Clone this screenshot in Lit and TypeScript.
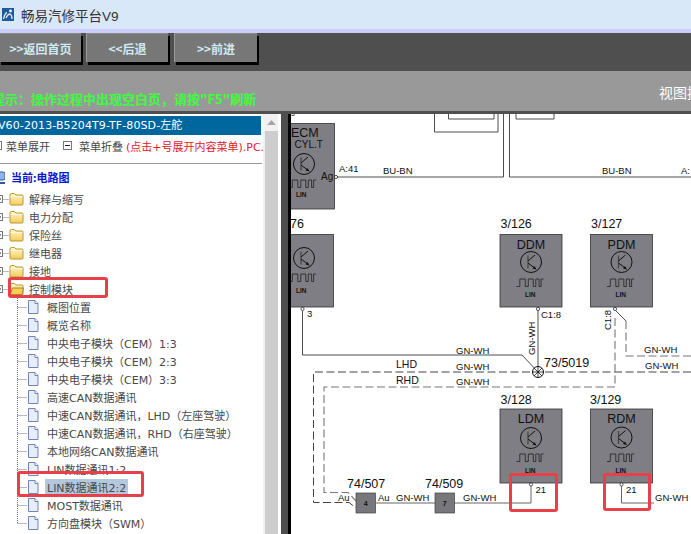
import {LitElement, css, html, svg} from 'lit';
import {customElement} from 'lit/decorators.js';

const FOLDERS = ['解释与缩写', '电力分配', '保险丝', '继电器', '接地'];
const PAGES = [
	'概图位置',
	'概览名称',
	'中央电子模块（CEM）1:3',
	'中央电子模块（CEM）2:3',
	'中央电子模块（CEM）3:3',
	'高速CAN数据通讯',
	'中速CAN数据通讯，LHD（左座驾驶）',
	'中速CAN数据通讯，RHD（右座驾驶）',
	'本地网络CAN数据通讯',
	'LIN数据通讯1:2',
	'LIN数据通讯2:2',
	'MOST数据通讯',
	'方向盘模块（SWM）',
];
const SELECTED = 'LIN数据通讯2:2';

// red annotations drawn over the screenshot: x, y, width, height
const MARKS = [
	[8, 277, 100, 21],
	[17, 471, 127, 26],
	[509, 473, 49, 39],
	[603, 473, 48, 38],
];

// everything in the diagram uses page coordinates (see the viewBox)
const label = (x: number, y: number, t: string, size = 9.5) =>
	svg`<text x=${x} y=${y} font-size=${size}>${t}</text>`;

const transistor = (cx: number, cy: number) => svg`
	<circle cx=${cx} cy=${cy} r="10.5" fill="none" stroke="#111" stroke-width="1"></circle>
	<path d="M${cx - 3} ${cy - 6.5} V${cy + 6.5}" stroke="#444" stroke-width="1.2"></path>
	<path d="M${cx - 3} ${cy - 1} L${cx + 4} ${cy - 7} M${cx - 3} ${cy + 1} L${cx + 5} ${cy + 7}" fill="none" stroke="#111" stroke-width="1"></path>
	<path d="M${cx + 5.5} ${cy + 7.5} l-4 -1 l2 -2.5 z" fill="#111"></path>`;

const wave = (x: number, y: number) => svg`
	<path d="M${x} ${y + 7.5} h3.3 v-7.5 h5.5 v7.5 h3 v-7.5 h5 v7.5 h2.5 v-7.5 h3.3 v7.5 h2 v-7.5 h2.5" fill="none" stroke="#222" stroke-width="0.8"></path>`;

const module = (
	x: number,
	y: number,
	w: number,
	h: number,
	title: string,
	cy: number,
	wy: number,
	ly: number,
) => svg`
	<rect x=${x} y=${y} width=${w} height=${h} fill="#7e7e84" stroke="#333" stroke-width="0.8"></rect>
	<text x=${x + w / 2} y=${y + 14} font-size="12.5" text-anchor="middle">${title}</text>
	${transistor(x + w / 2, cy)}
	${wave(x + w / 2 - 14.5, wy)}
	<text x=${x + w / 2 - 6} y=${ly} font-size="6.5" font-weight="bold" fill="#222">LIN</text>`;

const pin = (x: number, y: number) =>
	svg`<circle cx=${x} cy=${y} r="1.6" fill="#fff" stroke="#111" stroke-width="0.7"></circle>`;

const splitter = (x: number, y: number, n: string) => svg`
	<rect x=${x} y=${y} width="19.5" height="20" fill="#77777c" stroke="#444" stroke-width="0.7"></rect>
	<text x=${x + 9.7} y=${y + 12.5} font-size="7" font-weight="bold" text-anchor="middle">${n}</text>`;

@customElement('app-root')
export class AppRoot extends LitElement {
	static styles = css`
		:host {
			display: flex;
			flex-direction: column;
			position: relative;
			width: 691px;
			height: 534px;
			overflow: hidden;
			background: #fff;
			font-family: "DejaVu Sans", "Noto Sans CJK SC", sans-serif;
			font-size: 11px;
			color: #484848;
		}

		.title {
			flex: none;
			height: 29px;
			display: flex;
			align-items: center;
			gap: 7px;
			padding-left: 2px;
			background: #d9e8f9;
			border-bottom: 4px solid #ccccfa;
			font-family: "Liberation Sans", "Noto Sans CJK SC", sans-serif;
			font-size: 13.5px;
			color: #333;
		}

		.nav {
			flex: none;
			height: 38px;
			display: flex;
			gap: 5px;
			background: #4f4f4f;
		}

		.nav button {
			box-sizing: content-box;
			height: 28px;
			margin: 0;
			padding: 0;
			border: none;
			border-left: 1px solid #9a9a9a;
			border-top: 1px solid #8a8a8a;
			box-shadow: 2px 3px 0 #000;
			background: #777;
			color: #cfeaf2;
			font-family: "Noto Sans CJK SC", sans-serif;
			font-size: 12px;
			font-weight: bold;
		}

		.hint {
			flex: none;
			height: 43px;
			display: flex;
			align-items: flex-end;
			padding-bottom: 3px;
			box-sizing: border-box;
			background: #999;
			border-bottom: 3px solid #4f4f4f;
			white-space: nowrap;
			font-family: "Noto Sans CJK SC", sans-serif;
		}

		.hint-text {
			flex: none;
			width: 667px;
			margin-left: -8px;
			color: #3dff3d;
			font-size: 13px;
			font-weight: bold;
			line-height: 18px;
		}

		.hint-view {
			flex: none;
			color: #fff;
			font-size: 14px;
			line-height: 26px;
			margin-bottom: 3px;
		}

		.body {
			flex: 1;
			min-height: 0;
			display: flex;
		}

		.left {
			flex: none;
			width: 263px;
			padding-top: 2px;
			overflow: hidden;
		}

		.car {
			height: 19px;
			margin-right: 2px;
			background: #00669e;
			color: #fff;
			font-size: 11px;
			letter-spacing: 0.1px;
			line-height: 19px;
			white-space: nowrap;
			text-indent: -2px;
			overflow: hidden;
		}

		.menu {
			height: 29px;
			display: flex;
			align-items: center;
			padding-bottom: 7px;
			box-sizing: border-box;
			white-space: nowrap;
			border-bottom: 1px solid #999;
			margin-right: 1px;
		}

		.menu svg {
			flex: none;
		}

		.menu .open {
			margin-left: 4px;
		}

		.menu .shut {
			margin: 0 7px 0 13px;
		}

		.menu .red {
			margin-left: 3px;
			color: #e0202a;
		}

		.tree {
			padding-top: 4px;
		}

		.row {
			height: 18px;
			display: flex;
			align-items: center;
			white-space: nowrap;
		}

		.row svg {
			flex: none;
		}

		.current {
			margin-bottom: 4px;
			margin-left: -3px;
			gap: 6px;
			color: #0a16d0;
			font-weight: bold;
			font-family: "Noto Sans CJK SC", sans-serif;
		}

		.folder span {
			margin-left: 5px;
		}

		.page {
			padding-left: 17px;
		}

		.page span {
			margin-left: 6px;
			padding: 0 2px;
		}

		.page span.sel {
			background: #b5c7dd;
		}

		.scroll {
			flex: none;
			width: 15px;
			display: flex;
			flex-direction: column;
			align-items: flex-end;
			background: #f1f1f1;
		}

		.arrow {
			flex: none;
			height: 17px;
			width: 13px;
			display: flex;
			align-items: center;
			justify-content: center;
		}

		.thumb {
			flex: 1;
			width: 13px;
			background: #cdcdcd;
		}

		.gap {
			flex: none;
			width: 3px;
		}

		.split {
			flex: none;
			width: 7px;
			background: #4f4f4f;
			border-right: 3px solid #000;
		}

		.diagram {
			flex: 1;
			min-width: 0;
			display: block;
			height: 420px;
		}

		.diagram text {
			font-family: "Liberation Sans", sans-serif;
			fill: #111;
		}

		.mark {
			position: absolute;
			box-sizing: border-box;
			border: 3px solid #e8404a;
			border-radius: 3px;
		}
	`;

	private logo() {
		return html`<svg width="12" height="13" viewBox="0 0 12 13">
			<rect width="12" height="13" fill="#1d5c9c"></rect>
			<circle cx="8.5" cy="3" r="1.4" fill="#fff"></circle>
			<path d="M1.5 11 Q3 5 5 4.5 M4 10 Q6 6 8 6 Q10 7 10 11" fill="none" stroke="#dfeaf6" stroke-width="1.3"></path>
		</svg>`;
	}

	private box(size: number, plus: boolean) {
		const m = size / 2;
		return svg`
			<rect x="0.5" y="0.5" width=${size - 1} height=${size - 1} fill="#fff" stroke="#777"></rect>
			<path d="M2 ${m} H${size - 2}" stroke="#222"></path>
			${plus ? svg`<path d="M${m} 2 V${size - 2}" stroke="#222"></path>` : ''}`;
	}

	private folderIcon(open: boolean) {
		return html`<svg width="15" height="14" viewBox="0 0 15 14">
			<defs>
				<linearGradient id="fg" x1="0" y1="0" x2="0" y2="1">
					<stop offset="0" stop-color="#fff6cc"></stop>
					<stop offset="1" stop-color="#f5cd5a"></stop>
				</linearGradient>
			</defs>
			<path d="M1 3 q0 -1.5 1.5 -1.5 h3 l1.5 1.5 h6 q1 0 1 1 v8 q0 1 -1 1 h-11 q-1 0 -1 -1 z" fill="url(#fg)" stroke="#b8962e"></path>
			${open
				? svg`<path d="M1 12.5 L3.5 6 H14.5 L13 12.5 Z" fill="#f6cf55" stroke="#a98420"></path>`
				: svg`<path d="M1.5 4.5 H13.5" stroke="#fff8d8"></path>`}
		</svg>`;
	}

	private pageIcon() {
		return html`<svg width="12" height="14" viewBox="0 0 12 14">
			<path d="M1.5 0.5 H8 L11 3.5 V13.5 H1.5 Z" fill="#e6edfb" stroke="#6f86b4"></path>
			<path d="M8 0.5 V3.5 H11" fill="#fff" stroke="#6f86b4"></path>
		</svg>`;
	}

	private folderRow(name: string, open = false) {
		return html`<div class="row folder">
			<svg width="9" height="18" viewBox="0 0 9 18">
				<path d="M2.5 9.5 H9" stroke="#777" stroke-dasharray="1 1"></path>
				<g transform="translate(-5 5)">${this.box(8, !open)}</g>
			</svg>
			${this.folderIcon(open)}
			<span>${name}</span>
		</div>`;
	}

	private pageRow(name: string, last: boolean) {
		return html`<div class="row page">
			<svg width="10" height="18" viewBox="0 0 10 18">
				<path d="M0.5 0 V${last ? 9 : 18} M0.5 9.5 H10" fill="none" stroke="#777" stroke-dasharray="1 1"></path>
			</svg>
			${this.pageIcon()}
			<span class=${name === SELECTED ? 'sel' : ''}>${name}</span>
		</div>`;
	}

	private diagram() {
		return html`<svg class="diagram" viewBox="291 114 400 420" width="400" height="420">
			<!-- upper part of the sheet -->
			<path d="M434.5 114 V132 H498 V114 M448.5 114 V119 H494 V114 M516 114 V119 H554 V114" fill="none" stroke="#222" stroke-width="0.8"></path>
			<path d="M337 177 H503.5 V114 M509.5 114 V177 H691" fill="none" stroke="#222" stroke-width="0.8"></path>
			${label(291, 116, '5', 7)}
			${label(339, 172, 'A:41')} ${label(383, 174, 'BU-BN')} ${label(602, 174, 'BU-BN')} ${label(681, 174, 'A:')}

			<!-- ECM, partly hidden by the frame on the left -->
			<rect x="280" y="123.5" width="54.5" height="85.5" fill="#7e7e84" stroke="#333" stroke-width="0.8"></rect>
			${label(291, 136.5, 'ECM', 12.5)} ${label(294.5, 148, 'CYL.T', 10)}
			${transistor(304, 164)} ${wave(289, 180)}
			<text x="296" y="197" font-size="6.5" font-weight="bold" fill="#222">LIN</text>
			${label(321, 179.5, 'Ag', 10)} ${pin(336, 177)}

			<!-- 76 -->
			${label(290, 228, '76', 12.5)}
			<rect x="280" y="234.5" width="53.5" height="72.5" fill="#7e7e84" stroke="#333" stroke-width="0.8"></rect>
			${transistor(304, 258)} ${wave(289, 274)}
			<text x="296" y="293" font-size="6.5" font-weight="bold" fill="#222">LIN</text>
			${pin(302.5, 309)} ${label(307, 317, '3')}
			<path d="M302.5 311 V355 H522 L538 372" fill="none" stroke="#222" stroke-width="0.8"></path>

			<!-- door modules, upper row -->
			${label(500.5, 228, '3/126', 12.5)}
			${module(500, 234.5, 62, 72.5, 'DDM', 262, 279, 297)}
			${pin(538, 309)} ${label(541, 318, 'C1:8')}
			<path d="M538 311 V372" stroke="#222" stroke-width="0.8"></path>
			<text transform="translate(535 355) rotate(-90)" font-size="9.5">GN-WH</text>
			${label(591, 228, '3/127', 12.5)}
			${module(590.5, 234.5, 62, 72.5, 'PDM', 262, 279, 297)}
			${pin(615, 309)}
			<text transform="translate(611 330) rotate(-90)" font-size="9.5">C1:8</text>
			<path d="M616 311 L626 321" fill="none" stroke="#222" stroke-width="0.8"></path>

			<!-- LHD and RHD dashed routes -->
			<path d="M691 372 H313.5 V502.5 H349 L356 508" fill="none" stroke="#444" stroke-width="1" stroke-dasharray="8 3.5"></path>
			<path d="M615 318 V387 H324 V492.5 H348 L356 501" fill="none" stroke="#777" stroke-width="1.1" stroke-dasharray="8 3.5"></path>
			<path d="M691 356 H626 V321" fill="none" stroke="#777" stroke-width="1.1" stroke-dasharray="8 3.5"></path>
			${label(396, 368, 'LHD', 10.5)} ${label(396, 383.5, 'RHD', 10.5)}
			${label(456, 354, 'GN-WH')} ${label(456, 370, 'GN-WH')} ${label(456, 385, 'GN-WH')}
			${label(644, 353, 'GN-WH')} ${label(645, 369, 'GN-WH')}

			<circle cx="538" cy="372" r="5.5" fill="#fff" stroke="#111"></circle>
			<path d="M532.5 372 H543.5 M538 366.5 V377.5 M534 368 L542 376 M534 376 L542 368" stroke="#111" stroke-width="0.8"></path>
			${label(544, 367, '73/5019', 12.5)}

			<!-- door modules, lower row -->
			${label(500.5, 404, '3/128', 12.5)}
			${module(500, 409, 62, 74, 'LDM', 438, 454, 473)}
			${label(590, 404, '3/129', 12.5)}
			${module(590.5, 409, 62, 74, 'RDM', 437.5, 454, 473)}
			${pin(531, 484.5)} ${label(535.5, 493, '21')}
			${pin(621.5, 484.5)} ${label(626, 493, '21')}

			<!-- bottom line with the two connectors -->
			<path d="M376 503 H435 M454 503 H531 V486 M621.5 486 V503 H654" fill="none" stroke="#555" stroke-width="0.9"></path>
			${label(347, 488, '74/507', 12.5)} ${label(425, 488, '74/509', 12.5)}
			${splitter(356, 493, '4')} ${splitter(435, 493, '7')}
			${label(338, 501, 'Au')} ${label(378, 501, 'Au')}
			${label(396, 501, 'GN-WH')} ${label(463, 501, 'GN-WH')} ${label(655, 501, 'GN-WH')}
		</svg>`;
	}

	render() {
		return html`
			<div class="title">${this.logo()}<span>畅易汽修平台V9</span></div>
			<div class="nav">
				<button style="width:81px;margin-left:-1px">&gt;&gt;返回首页</button>
				<button style="width:81px">&lt;&lt;后退</button>
				<button style="width:82px;margin-left:1px">&gt;&gt;前进</button>
			</div>
			<div class="hint">
				<span class="hint-text">提示：操作过程中出现空白页，请按"F5"刷新</span>
				<span class="hint-view">视图控制</span>
			</div>
			<div class="body">
				<div class="left">
					<div class="car">V60-2013-B5204T9-TF-80SD-左舵</div>
					<div class="menu">
						<svg width="2" height="9" viewBox="7 0 2 9">${this.box(9, false)}</svg>
						<span class="open">菜单展开</span>
						<svg class="shut" width="9" height="9" viewBox="0 0 9 9">${this.box(9, false)}</svg>
						<span>菜单折叠</span>
						<span class="red">(点击+号展开内容菜单).PC.</span>
					</div>
					<div class="tree">
						<div class="row current">
							<svg width="8" height="13" viewBox="3 0 8 13">
								<rect x="1" y="1" width="10" height="8" rx="2" fill="#8fb4e8" stroke="#2d5aa6"></rect>
								<path d="M3 12 H11" stroke="#2d5aa6" stroke-width="2"></path>
							</svg>
							<span>当前:电路图</span>
						</div>
						${FOLDERS.map(f => this.folderRow(f))}
						${this.folderRow('控制模块', true)}
						${PAGES.map((p, i) => this.pageRow(p, i === PAGES.length - 1))}
					</div>
				</div>
				<div class="scroll">
					<div class="arrow">
						<svg width="9" height="5" viewBox="0 0 9 5"><path d="M0 5 L4.5 0 L9 5 Z" fill="#a6a6a6"></path></svg>
					</div>
					<div class="thumb"></div>
				</div>
				<div class="gap"></div>
				<div class="split"></div>
				${this.diagram()}
			</div>
			${MARKS.map(
				([x, y, w, h]) =>
					html`<div class="mark" style="left:${x}px;top:${y}px;width:${w}px;height:${h}px"></div>`,
			)}
		`;
	}
}
